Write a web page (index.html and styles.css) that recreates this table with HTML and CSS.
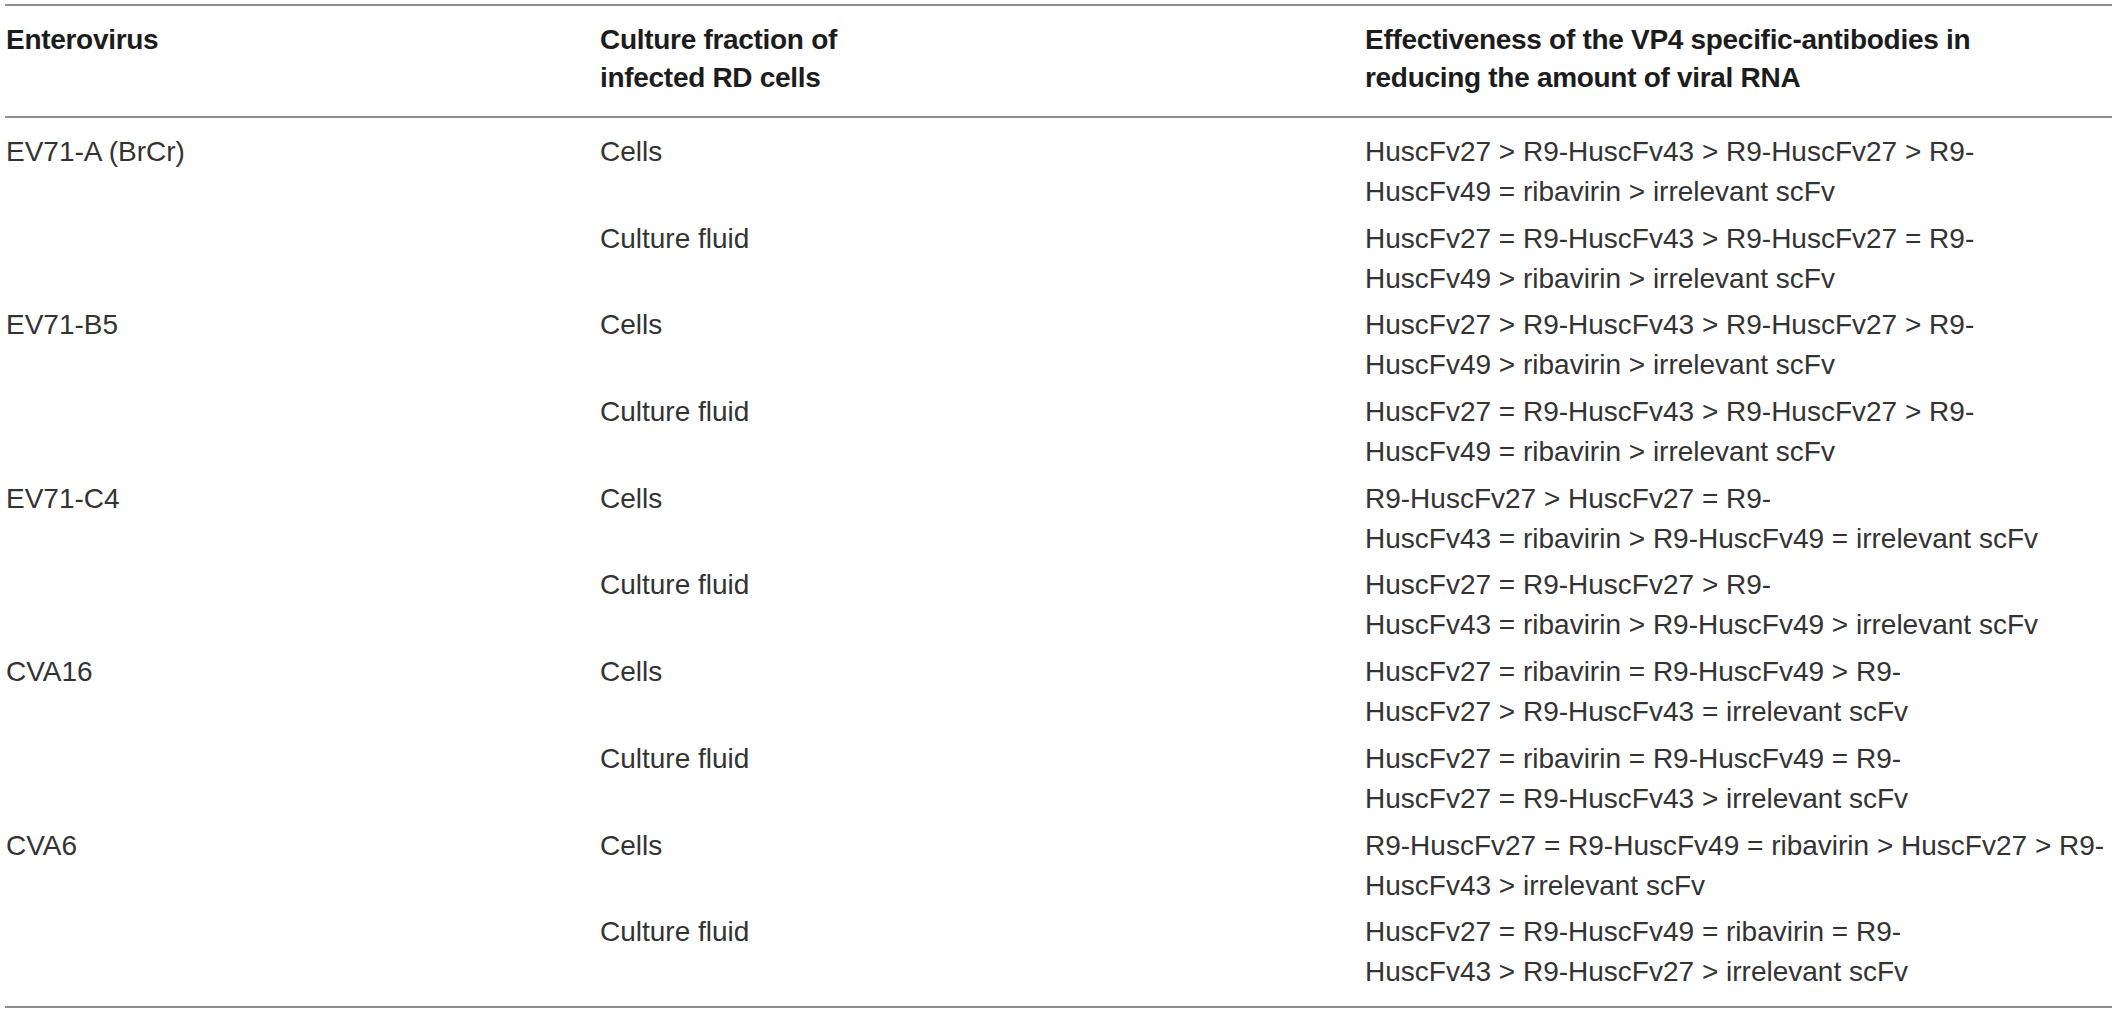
FILE: index.html
```html
<!DOCTYPE html>
<html lang="en">
<head>
<meta charset="utf-8">
<title>Enterovirus VP4 antibodies</title>
<link rel="stylesheet" href="styles.css">
</head>
<body>
<table class="data">
  <colgroup>
    <col class="c1">
    <col class="c2">
    <col class="c3">
  </colgroup>
  <thead>
    <tr>
      <th>Enterovirus</th>
      <th>Culture fraction of<br>infected RD cells</th>
      <th>Effectiveness of the VP4 specific-antibodies in<br>reducing the amount of viral RNA</th>
    </tr>
  </thead>
  <tbody>
    <tr>
      <td>EV71-A (BrCr)</td>
      <td>Cells</td>
      <td class="eff">HuscFv27 &gt; R9-HuscFv43 &gt; R9-HuscFv27 &gt; R9-<br>HuscFv49 = ribavirin &gt; irrelevant scFv</td>
    </tr>
    <tr>
      <td></td>
      <td>Culture fluid</td>
      <td class="eff">HuscFv27 = R9-HuscFv43 &gt; R9-HuscFv27 = R9-<br>HuscFv49 &gt; ribavirin &gt; irrelevant scFv</td>
    </tr>
    <tr>
      <td>EV71-B5</td>
      <td>Cells</td>
      <td class="eff">HuscFv27 &gt; R9-HuscFv43 &gt; R9-HuscFv27 &gt; R9-<br>HuscFv49 &gt; ribavirin &gt; irrelevant scFv</td>
    </tr>
    <tr>
      <td></td>
      <td>Culture fluid</td>
      <td class="eff">HuscFv27 = R9-HuscFv43 &gt; R9-HuscFv27 &gt; R9-<br>HuscFv49 = ribavirin &gt; irrelevant scFv</td>
    </tr>
    <tr>
      <td>EV71-C4</td>
      <td>Cells</td>
      <td class="eff">R9-HuscFv27 &gt; HuscFv27 = R9-<br>HuscFv43 = ribavirin &gt; R9-HuscFv49 = irrelevant scFv</td>
    </tr>
    <tr>
      <td></td>
      <td>Culture fluid</td>
      <td class="eff">HuscFv27 = R9-HuscFv27 &gt; R9-<br>HuscFv43 = ribavirin &gt; R9-HuscFv49 &gt; irrelevant scFv</td>
    </tr>
    <tr>
      <td>CVA16</td>
      <td>Cells</td>
      <td class="eff">HuscFv27 = ribavirin = R9-HuscFv49 &gt; R9-<br>HuscFv27 &gt; R9-HuscFv43 = irrelevant scFv</td>
    </tr>
    <tr>
      <td></td>
      <td>Culture fluid</td>
      <td class="eff">HuscFv27 = ribavirin = R9-HuscFv49 = R9-<br>HuscFv27 = R9-HuscFv43 &gt; irrelevant scFv</td>
    </tr>
    <tr>
      <td>CVA6</td>
      <td>Cells</td>
      <td class="eff">R9-HuscFv27 = R9-HuscFv49 = ribavirin &gt; HuscFv27 &gt; R9-<br>HuscFv43 &gt; irrelevant scFv</td>
    </tr>
    <tr>
      <td></td>
      <td>Culture fluid</td>
      <td class="eff">HuscFv27 = R9-HuscFv49 = ribavirin = R9-<br>HuscFv43 &gt; R9-HuscFv27 &gt; irrelevant scFv</td>
    </tr>
  </tbody>
</table>
</body>
</html>
```

FILE: styles.css
```css
html, body {
  margin: 0;
  padding: 0;
  background: #ffffff;
}

body {
  padding: 4px 5px 0 5px;
  font-family: "Liberation Sans", Arial, sans-serif;
  font-size: 28px;
  line-height: 40px;
  color: #333333;
}

.data {
  width: 100%;
  border-collapse: collapse;
  table-layout: fixed;
}

.data .c1 { width: 594px; }
.data .c2 { width: 765px; }
.data .c3 { width: auto; }

.data thead th {
  text-align: left;
  vertical-align: top;
  font-weight: 700;
  color: #1c1c1c;
  letter-spacing: -0.3px;
  padding: 15px 0 19px 1px;
  border-top: 2px solid #8e8e8e;
  border-bottom: 2px solid #8e8e8e;
  line-height: 38px;
}

.data tbody td {
  vertical-align: top;
  padding: 3px 0 3.7px 1px;
  font-weight: 400;
  white-space: nowrap;
}

.data tbody tr:first-child td {
  padding-top: 14px;
}

.data tbody tr:last-child td {
  padding-bottom: 14px;
  border-bottom: 2px solid #8e8e8e;
}
```
